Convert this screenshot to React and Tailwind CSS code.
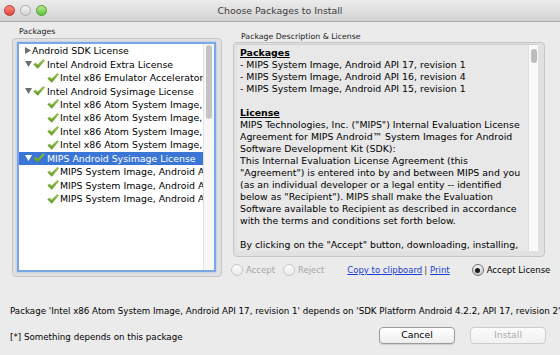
import React from "react";

const Check = () => (
  <svg width="12" height="10" viewBox="0 0 12 10" className="shrink-0">
    <defs>
      <linearGradient id="cg" x1="0" y1="0" x2="0" y2="1">
        <stop offset="0" stopColor="#9fd04f" />
        <stop offset="1" stopColor="#5e9a1e" />
      </linearGradient>
    </defs>
    <path d="M0.6 5.4 L2.6 4 L4.6 6 L10.4 0.3 L11.6 1.4 L4.8 9.4 Z" fill="url(#cg)" stroke="#5a8f1f" strokeWidth="0.4" />
  </svg>
);

const TriDown = ({ white }) => (
  <svg width="7" height="6" viewBox="0 0 7 6" className="shrink-0">
    <polygon points="0,0 7,0 3.5,6" fill={white ? "#ffffff" : "#6f6f6f"} />
  </svg>
);

const TriRight = () => (
  <svg width="6" height="7" viewBox="0 0 6 7" className="shrink-0">
    <polygon points="0,0 6,3.5 0,7" fill="#6f6f6f" />
  </svg>
);

const rows = [
  { lvl: 0, tri: "right", check: false, text: "Android SDK License" },
  { lvl: 0, tri: "down", check: true, text: "Intel Android Extra License" },
  { lvl: 1, text: "Intel x86 Emulator Accelerator (HAXM), revision 3" },
  { lvl: 0, tri: "down", check: true, text: "Intel Android Sysimage License" },
  { lvl: 1, text: "Intel x86 Atom System Image, Android API 17, revision 1" },
  { lvl: 1, text: "Intel x86 Atom System Image, Android API 16, revision 1" },
  { lvl: 1, text: "Intel x86 Atom System Image, Android API 15, revision 1" },
  { lvl: 1, text: "Intel x86 Atom System Image, Android API 10, revision 1" },
  { lvl: 0, tri: "down", check: true, text: "MIPS Android Sysimage License", sel: true },
  { lvl: 1, text: "MIPS System Image, Android API 17, revision 1" },
  { lvl: 1, text: "MIPS System Image, Android API 16, revision 4" },
  { lvl: 1, text: "MIPS System Image, Android API 15, revision 1" },
];

const TreeRow = ({ r }) => {
  const base =
    "flex items-center h-[13.45px] whitespace-nowrap text-[9.4px] leading-[13px] " +
    (r.sel ? "bg-[#3a76d6] text-white" : "text-black");
  if (r.lvl === 1) {
    return (
      <div className={base}>
        <div className="w-[28px] shrink-0" />
        <Check />
        <span className="ml-[1px]">{r.text}</span>
      </div>
    );
  }
  return (
    <div className={base}>
      <div className="w-[6px] shrink-0" />
      {r.tri === "right" ? <TriRight /> : <TriDown white={r.sel} />}
      {r.check ? (
        <>
          <div className="w-[1px] shrink-0" />
          <Check />
          <span className="ml-[2px]">{r.text}</span>
        </>
      ) : (
        <span className="ml-[1px]">{r.text}</span>
      )}
    </div>
  );
};

const Radio = ({ checked, disabled }) => (
  <div
    className={
      "w-[12px] h-[12px] rounded-full border flex items-center justify-center shrink-0 " +
      (disabled
        ? "border-[#c6c6c6] bg-gradient-to-b from-[#fbfbfb] to-[#ececec]"
        : "border-[#6f747c] bg-gradient-to-b from-[#f4f4f4] to-[#c8cbd0]")
    }
  >
    {checked && <div className="w-[5px] h-[5px] rounded-full bg-[#1c1c1c]" />}
  </div>
);

const bodyLines = [
  { t: "Packages", h: true },
  { t: "- MIPS System Image, Android API 17, revision 1" },
  { t: "- MIPS System Image, Android API 16, revision 4" },
  { t: "- MIPS System Image, Android API 15, revision 1" },
  { t: "" },
  { t: "License", h: true },
  { t: 'MIPS Technologies, Inc. ("MIPS") Internal Evaluation License' },
  { t: "Agreement for MIPS Android\u2122 System Images for Android" },
  { t: "Software Development Kit (SDK):" },
  { t: "This Internal Evaluation License Agreement (this" },
  { t: '"Agreement") is entered into by and between MIPS and you' },
  { t: "(as an individual developer or a legal entity -- identified" },
  { t: 'below as "Recipient"). MIPS shall make the Evaluation' },
  { t: "Software available to Recipient as described in accordance" },
  { t: "with the terms and conditions set forth below." },
  { t: "" },
  { t: 'By clicking on the "Accept" button, downloading, installing,' },
];

export default function App() {
  return (
    <div className="w-[560px] h-[355px] overflow-hidden bg-[#ebebeb] flex flex-col font-['DejaVu_Sans',sans-serif] select-none">
      {/* Title bar */}
      <div className="h-[22px] shrink-0 grid grid-cols-[1fr_auto_1fr] items-center bg-gradient-to-b from-[#ececec] to-[#d2d2d2] border-b border-[#a8a8a8]">
        <div className="flex items-center pl-[4px]">
          <div className="w-[11px] h-[11px] rounded-full border border-[#b0392f] bg-gradient-to-b from-[#ff8a80] to-[#e0443a]" />
          <div className="w-[11px] h-[11px] rounded-full border border-[#ababab] bg-gradient-to-b from-[#f4f4f4] to-[#d3d3d3] ml-[5px]" />
          <div className="w-[11px] h-[11px] rounded-full border border-[#4f9a2c] bg-gradient-to-b from-[#b6ec8c] to-[#5fbf36] ml-[5px]" />
        </div>
        <div className="text-[9.4px] text-[#3c3c3c] leading-none">Choose Packages to Install</div>
        <div />
      </div>

      {/* Main panels */}
      <div className="flex pt-[5px] pl-[12px]">
        {/* Left */}
        <div className="w-[210px] flex flex-col shrink-0">
          <div className="h-[10px] leading-[10px] text-[7.8px] text-[#222] pl-[7px] mb-[1px]">Packages</div>
          <div className="h-[239px] rounded-[4px] border border-[#c6c6c6] bg-[#e1e1e1] pt-[3px] pl-[4px] pr-[5px] pb-[4px] flex">
            <div className="flex-1 flex border-2 border-[#7aa6e3] bg-white shadow-[0_0_2px_#9cc0f0] overflow-hidden">
              <div className="flex-1 min-w-0 overflow-hidden flex flex-col">
                {rows.map((r, i) => (
                  <TreeRow key={i} r={r} />
                ))}
              </div>
              <div className="w-[11px] shrink-0 bg-[#f7f7f7] border-l border-[#e2e2e2] pt-[1px] flex justify-center">
                <div className="w-[6px] h-[74px] rounded-full bg-[#c4c4c4]" />
              </div>
            </div>
          </div>
        </div>

        {/* Right */}
        <div className="w-[312px] ml-[11px] flex flex-col shrink-0">
          <div className="h-[10px] leading-[10px] text-[7.8px] text-[#222] pl-[8px] mt-[5px]">
            Package Description &amp; License
          </div>
          <div className="h-[215px] rounded-[4px] border border-[#c6c6c6] bg-[#e1e1e1] pt-[1px] pl-[3px] pr-[6px] pb-[5px] flex">
            <div className="flex-1 flex bg-[#e8e8e8] border-t border-[#cfcfcf] overflow-hidden">
              <div className="flex-1 min-w-0 overflow-hidden pl-[3px] pt-[2px]">
                {bodyLines.map((l, i) => (
                  <div key={i} className="h-[12px] leading-[12px] text-[9.4px] text-black whitespace-nowrap">
                    {l.h ? <span className="font-bold underline">{l.t}</span> : l.t}
                  </div>
                ))}
              </div>
              <div className="w-[10px] shrink-0 bg-[#fafafa] border-l border-[#e0e0e0] pt-[4px] flex justify-center">
                <div className="w-[6px] h-[14px] rounded-full bg-[#bcbcbc]" />
              </div>
            </div>
          </div>
          <div className="flex items-center h-[14px] mt-[6px] -ml-[2px] text-[8.5px] whitespace-nowrap">
            <Radio disabled />
            <span className="ml-[3px] text-[#a6a6a6]">Accept</span>
            <div className="ml-[8px]" />
            <Radio disabled />
            <span className="ml-[3px] text-[#a6a6a6]">Reject</span>
            <span className="ml-[23px] text-[#1a3fd6] underline">Copy to clipboard</span>
            <span className="ml-[2px] text-[#333]">|</span>
            <span className="ml-[3px] text-[#1a3fd6] underline">Print</span>
            <div className="ml-[22px]" />
            <Radio checked />
            <span className="ml-[3px] text-black">Accept License</span>
          </div>
        </div>
      </div>

      {/* Status */}
      <div className="mt-[28px] pl-[10px] h-[12px] leading-[12px] text-[8.7px] text-black whitespace-nowrap overflow-hidden">
        Package 'Intel x86 Atom System Image, Android API 17, revision 1' depends on 'SDK Platform Android 4.2.2, API 17, revision 2'
      </div>

      <div className="mt-[9px] flex items-center pl-[10px] pr-[14px] h-[18px]">
        <div className="flex-1 text-[8.7px] text-black mt-[4px] leading-[12px]">[*] Something depends on this package</div>
        <button className="w-[76px] h-[17px] rounded-[4px] border border-[#9b9b9b] bg-gradient-to-b from-white to-[#ededed] shadow-[0_1px_1px_rgba(0,0,0,0.12)] text-[9.3px] text-black leading-none">
          Cancel
        </button>
        <button className="ml-[15px] w-[76px] h-[17px] rounded-[4px] border border-[#cdcdcd] bg-gradient-to-b from-[#fbfbfb] to-[#f1f1f1] text-[9.3px] text-[#ababab] leading-none">
          Install
        </button>
      </div>
    </div>
  );
}
